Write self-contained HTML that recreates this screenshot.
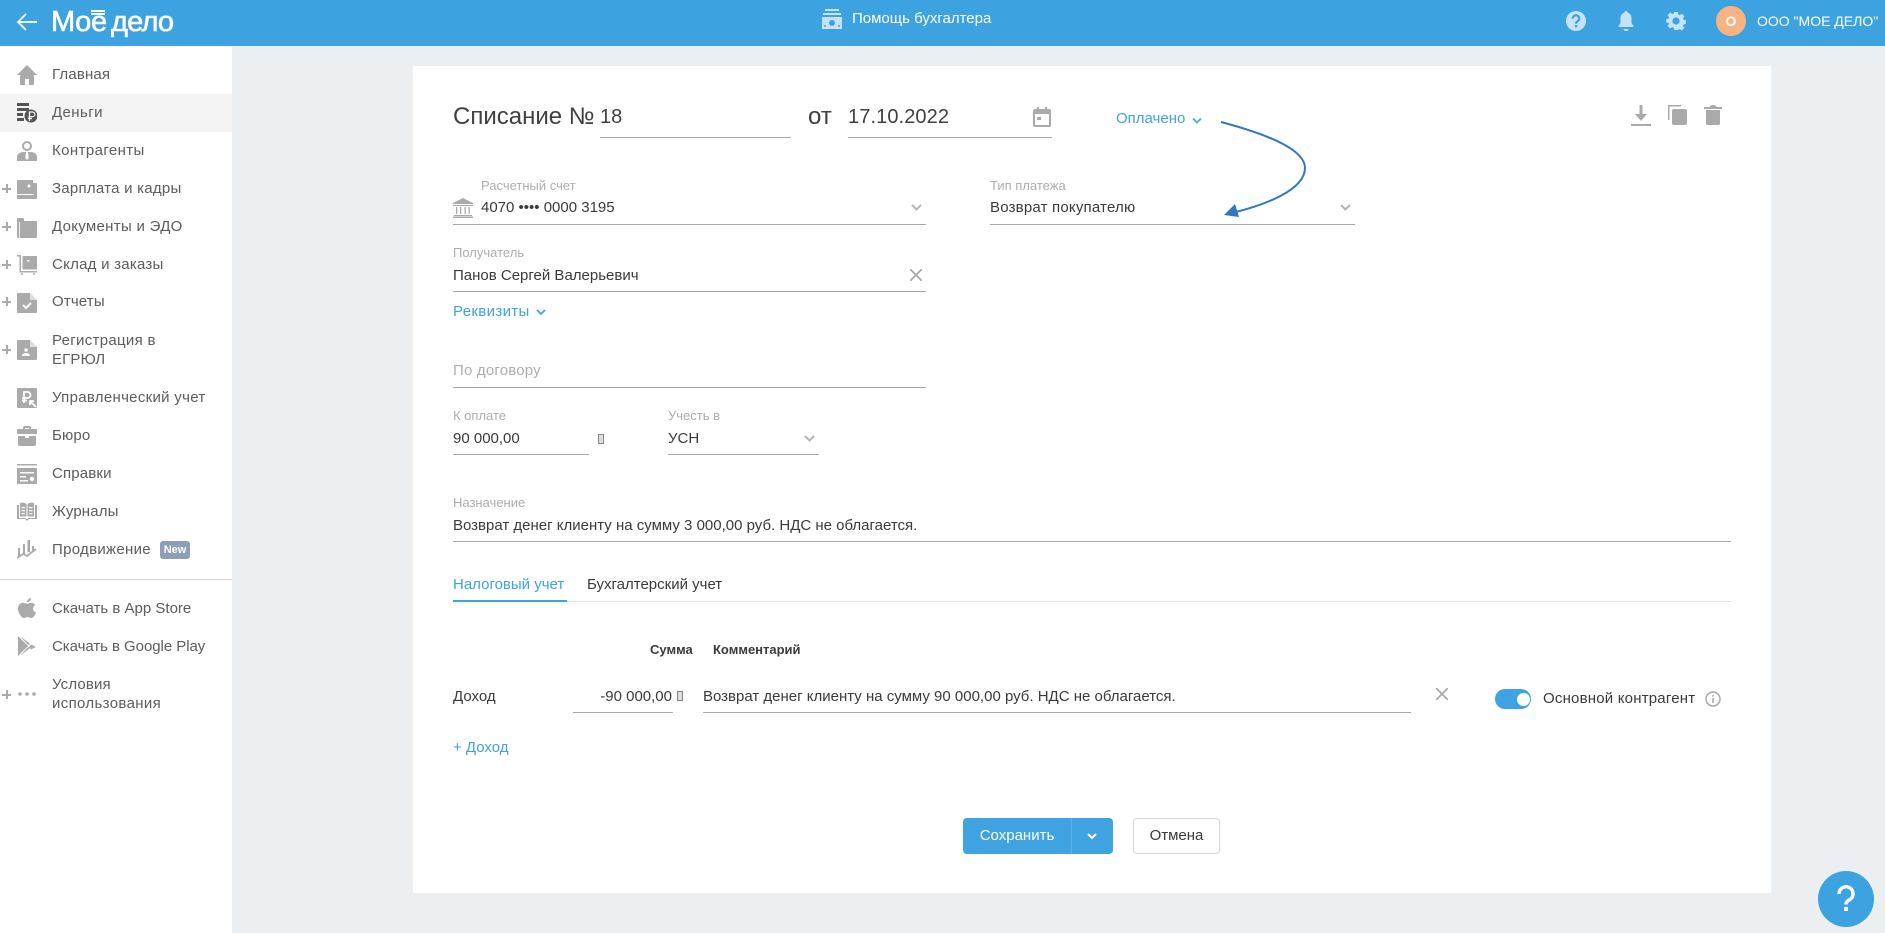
<!DOCTYPE html>
<html lang="ru"><head><meta charset="utf-8"><title>Списание</title>
<style>
html,body{margin:0;padding:0;width:1885px;height:933px;overflow:hidden;background:#ebeff2;font-family:"Liberation Sans",Arial,sans-serif;color:#3b3b3b}
.a,.t,.l,.n,.u,svg{position:absolute}
.t,.l,.n{white-space:nowrap;line-height:20px;height:20px}
.t{font-size:15px;color:#3a3a3a}
.l{font-size:13px;color:#adadad}
.n{font-size:15px;color:#5c5c5c;left:52px;margin-top:1px;letter-spacing:.15px}
.u{height:1px;background:#a9a9a9}
.b{color:#3ea3e0}
.i{left:17px;width:20px;height:20px;fill:#aaa}
.p{position:absolute;left:2px;width:10px;height:10px;font-size:0}
.p:before{content:"";position:absolute;left:0;top:4px;width:9px;height:2px;background:#aaa}
.p:after{content:"";position:absolute;left:3.5px;top:0;width:2px;height:9px;background:#aaa}
.tf{position:absolute;width:4px;height:8px;border:1px solid #888;background:#ddd}
</style></head><body>

<div class="a" style="left:0;top:0;width:1885px;height:46px;background:#3da3e0"></div>
<svg style="left:16px;top:12px" width="22" height="20" viewBox="0 0 22 20" fill="none" stroke="#fff" stroke-width="1.7"><path d="M21 10H2M10 2l-8 8 8 8"/></svg>
<div class="a" style="left:51px;top:4px;font-size:29px;line-height:36px;color:#fff;white-space:nowrap;letter-spacing:-.3px;-webkit-text-stroke:.6px #fff">Мое</div>
<div class="a" style="left:91px;top:10px;width:14px;height:2px;background:#fff"></div>
<div class="a" style="left:91px;top:13px;width:14px;height:2px;background:#fff"></div>
<div class="a" style="left:111px;top:4px;font-size:29px;line-height:36px;color:#fff;white-space:nowrap;letter-spacing:-.8px;-webkit-text-stroke:.6px #fff">дело</div>

<svg style="left:822px;top:9px" width="20" height="20" viewBox="0 0 20 20" fill="#c5e2f6"><rect x="3" y="0" width="14" height="2"/><rect x="1" y="4" width="18" height="2"/><path d="M0 8h20v12H0z"/><circle cx="10" cy="14" r="3" fill="#3da3e0"/><circle cx="3" cy="17" r="1" fill="#3da3e0"/><circle cx="17" cy="17" r="1" fill="#3da3e0"/></svg>
<div class="t" style="left:852px;top:9px;font-size:15px;color:#fff">Помощь бухгалтера</div>

<svg style="left:1566px;top:11px" width="20" height="20" viewBox="0 0 20 20"><circle cx="10" cy="10" r="10" fill="#c5e2f6"/><path d="M6.8 7.5a3.2 3.2 0 1 1 5 2.6c-1.2.8-1.8 1.3-1.8 2.6" fill="none" stroke="#3da3e0" stroke-width="2.2"/><rect x="8.9" y="14" width="2.3" height="2.3" fill="#3da3e0"/></svg>
<svg style="left:1618px;top:10px" width="16" height="22" viewBox="0 0 16 22" fill="#c5e2f6"><path d="M8 1c1 0 1.5.6 1.5 1.5C12 3.300 13.500 5.500 13.500 8v5l2 3v1H.5v-1l2-3V8c0-2.500 1.500-4.700 4-5.500C6.500 1.600 7 1 8 1z"/><path d="M5.500 19h5c0 1.200-1 2-2.500 2s-2.500-.8-2.500-2z"/></svg>
<svg style="left:1666px;top:11px" width="20" height="20" viewBox="0 0 20 20"><path fill="#c5e2f6" d="M8 0h4l.5 2.700 1.800.8 2.300-1.600 2.800 2.800-1.600 2.300.7 1.800 2.500.4v4l-2.500.5-.8 1.800 1.600 2.300-2.800 2.800-2.300-1.600-1.800.7L12 20H8l-.5-2.500-1.800-.7-2.300 1.600-2.800-2.800 1.600-2.300-.8-1.800L-1 11.900V8l2.500-.5.8-1.800L.7 3.400l2.800-2.800 2.200 1.600 1.800-.7z" transform="translate(1 1) scale(.9)"/><circle cx="10" cy="10" r="3.600" fill="#3da3e0"/></svg>
<div class="a" style="left:1716px;top:6px;width:30px;height:30px;border-radius:50%;background:#f9b282;color:#fff;font-size:14px;font-weight:bold;line-height:30px;text-align:center">О</div>
<div class="t" style="left:1757px;top:11px;font-size:14px;color:#fff">ООО "МОЕ ДЕЛО"</div>

<div class="a" style="left:0;top:46px;width:232px;height:887px;background:#fff"></div>
<div class="a" style="left:0;top:94px;width:232px;height:38px;background:#f4f4f4"></div>

<svg class="i" style="top:65px" viewBox="0 0 20 20"><path d="M10 0L0 10h3v8.500c0 .8.500 1.500 1.300 1.500H8v-6h4v6h3.700c.8 0 1.300-.7 1.300-1.500V10h3z"/></svg>
<div class="n" style="top:64px">Главная</div>

<svg class="i" style="top:103px;fill:#555" viewBox="0 0 20 20"><rect width="12" height="3"/><rect y="5" width="12" height="3"/><rect y="10" width="6" height="3"/><rect y="15" width="7" height="3"/><circle cx="14" cy="13" r="6.500"/><path d="M12.500 18v-9h3a2.200 2.200 0 0 1 0 4.700h-4M11 15.500h4" fill="none" stroke="#fff" stroke-width="1.200"/></svg>
<div class="n" style="top:102px;letter-spacing:.4px">Деньги</div>

<svg class="i" style="top:141px" viewBox="0 0 20 20"><circle cx="10" cy="5" r="4" fill="none" stroke="#aaa" stroke-width="2"/><path d="M0 20v-4c0-3 3-5 7-5h6c4 0 7 2 7 5v4H0z"/><path d="M9 11h2l.7 6L10 19l-1.700-2z" fill="#fff"/></svg>
<div class="n" style="top:140px;letter-spacing:.4px">Контрагенты</div>

<div class="p" style="top:184px"></div>
<svg class="i" style="top:180px" viewBox="0 0 20 20"><path d="M1 0h15v3h4v15c0 .6-.4 1-1 1H1c-.6 0-1-.4-1-1V1c0-.6.400-1 1-1z"/><circle cx="12" cy="6" r="1.500" fill="#fff"/><path d="M0 14h17v1H0z" fill="#fff"/></svg>
<div class="n" style="top:178px;letter-spacing:.25px">Зарплата и кадры</div>

<div class="p" style="top:222px"></div>
<svg class="i" style="top:218px" viewBox="0 0 20 20"><path d="M0 1c0-.6.400-1 1-1h5c.6 0 1 .4 1 1v2h12c.6 0 1 .4 1 1v15c0 .6-.4 1-1 1H1c-.6 0-1-.4-1-1z"/><path d="M3 4V20H2.200V4z" fill="#fff"/></svg>
<div class="n" style="top:216px;letter-spacing:.3px">Документы и ЭДО</div>

<div class="p" style="top:260px"></div>
<svg class="i" style="top:255px" viewBox="0 0 20 20"><path d="M0 0h4v16h16v1.500H2.500V1.500H0z"/><rect x="5.500" y="1" width="14.500" height="13.500" rx=".5"/><rect x="10" y="5" width="2.500" height="1.500" fill="#fff"/><circle cx="5" cy="19" r="1"/><circle cx="17" cy="19" r="1"/></svg>
<div class="n" style="top:254px;letter-spacing:.25px">Склад и заказы</div>

<div class="p" style="top:297px"></div>
<svg class="i" style="top:293px" viewBox="0 0 20 20"><path d="M1 0h12l7 7v12c0 .6-.4 1-1 1H1c-.6 0-1-.4-1-1V1c0-.6.400-1 1-1z"/><path d="M13 0v7h7z" fill="#fff" opacity=".6"/><path d="M6 12l3 3 5-5" fill="none" stroke="#fff" stroke-width="2"/></svg>
<div class="n" style="top:291px">Отчеты</div>

<div class="p" style="top:345px"></div>
<svg class="i" style="top:340px" viewBox="0 0 20 20"><path d="M1 0h12l7 7v12c0 .6-.4 1-1 1H1c-.6 0-1-.4-1-1V1c0-.6.400-1 1-1z"/><path d="M13 0v7h7z" fill="#fff" opacity=".6"/><circle cx="9" cy="10" r="1.800" fill="#fff"/><path d="M5 16c0-2 2-3 4-3s4 1 4 3z" fill="#fff"/></svg>
<div class="n" style="top:330px;letter-spacing:.3px">Регистрация в</div>
<div class="n" style="top:349px">ЕГРЮЛ</div>

<svg class="i" style="top:388px" viewBox="0 0 20 20"><path d="M1 0h18c.6 0 1 .4 1 1v18c0 .6-.4 1-1 1H1c-.6 0-1-.4-1-1V1c0-.6.400-1 1-1z"/><path d="M7 15V4h3.500a3 3 0 0 1 0 6H5M5 12.500h5" fill="none" stroke="#fff" stroke-width="1.800"/><path d="M19 19l-6-6M13 17v-4h4" fill="none" stroke="#fff" stroke-width="1.800"/></svg>
<div class="n" style="top:387px;letter-spacing:.3px">Управленческий учет</div>

<svg class="i" style="top:426px" viewBox="0 0 20 20"><path d="M6 3V1.500C6 .6 6.600 0 7.500 0h5c.9 0 1.500.6 1.500 1.500V3h5c.6 0 1 .4 1 1v4H0V4c0-.6.400-1 1-1zm2-1v1h4V2z"/><path d="M1 10h7v2h4v-2h7v8.500c0 .8-.6 1.500-1.500 1.500h-15C1.600 20 1 19.300 1 18.500z"/></svg>
<div class="n" style="top:425px">Бюро</div>

<svg class="i" style="top:464px" viewBox="0 0 20 20"><rect width="20" height="1.500"/><path d="M0 4h20v16H0z"/><g fill="#fff"><rect x="3" y="8" width="14" height="1.500"/><rect x="3" y="12" width="6" height="1.500"/><rect x="3" y="16" width="8" height="1.500"/><circle cx="15" cy="15" r="2.200"/></g></svg>
<div class="n" style="top:463px">Справки</div>

<svg class="i" style="top:502px" viewBox="0 0 20 20"><path d="M0 3h2v13h7v1H0zM20 3h-2v13h-7v1h9z"/><path d="M3 1c2-.6 5-.6 6.500 1v12.500H3zM17 1c-2-.6-5-.6-6.500 1v12.500H17z"/><g fill="#fff"><rect x="4.500" y="5" width="3.500" height="1.200"/><rect x="4.500" y="8" width="3.500" height="1.200"/><rect x="4.500" y="11" width="3.500" height="1.200"/><rect x="12" y="5" width="3.500" height="1.200"/><rect x="12" y="8" width="3.500" height="1.200"/><rect x="12" y="11" width="3.500" height="1.200"/></g><path d="M8 17h4l-2 2z"/></svg>
<div class="n" style="top:501px">Журналы</div>

<svg class="i" style="top:540px" viewBox="0 0 20 20"><rect x="1" y="8" width="2" height="9"/><rect x="6" y="4" width="2" height="10"/><rect x="10.500" y="0" width="2.500" height="12"/><rect x="15" y="6" width="2" height="5"/><path d="M0 18l6-4 4 2 9-7" fill="none" stroke="#aaa" stroke-width="1.800"/></svg>
<div class="n" style="top:539px;letter-spacing:.3px">Продвижение</div>
<div class="a" style="left:160px;top:541px;width:30px;height:18px;border-radius:3px;background:#8d9fb8;color:#fff;font-size:11px;font-weight:bold;line-height:18px;text-align:center">New</div>

<div class="a" style="left:0;top:579px;width:232px;height:1px;background:#d4d4d4"></div>

<svg class="i" style="top:598px" viewBox="0 0 20 20"><path d="M14 0c.1 2.300-1.800 4.400-4 4.300C9.800 2.300 12 .1 14 0z"/><path d="M10 5.800c1 0 2.300-1 4.300-1 1.500 0 3 .8 3.900 2.200-3.300 2-2.700 6.300.8 7.600-.9 2.500-2.800 5.400-4.700 5.400-1.400 0-2-.9-3.700-.9s-2.400.9-3.700.9C4.200 20 1 14.900 1 10.600 1 6.900 3.400 4.800 5.900 4.800c1.800 0 3.100 1 4.100 1z"/></svg>
<div class="n" style="top:598px;letter-spacing:0">Скачать в App Store</div>

<svg class="i" style="top:636px" viewBox="0 0 20 20"><path d="M1 0l10 10L1 20zM3 0l10 8-2 1zM3 20l10-8-2-1zM14 8.500l5 2.500-5 2.500-2-2.500z"/></svg>
<div class="n" style="top:636px;letter-spacing:-.05px">Скачать в Google Play</div>

<div class="p" style="top:690px"></div>
<svg class="i" style="top:684px" viewBox="0 0 20 20"><circle cx="3" cy="10" r="1.800"/><circle cx="10" cy="10" r="1.800"/><circle cx="17" cy="10" r="1.800"/></svg>
<div class="n" style="top:674px">Условия</div>
<div class="n" style="top:693px;letter-spacing:.35px">использования</div>

<div class="a" style="left:413px;top:66px;width:1358px;height:827px;background:#fff"></div>

<div class="t" style="left:453px;top:106px;font-size:24px;line-height:22px;color:#404040">Списание №</div>
<div class="t" style="left:600px;top:107px;font-size:20px;color:#404040">18</div>
<div class="u" style="left:600px;top:137px;width:191px"></div>
<div class="t" style="left:808px;top:106px;font-size:24px;line-height:22px;color:#404040">от</div>
<div class="t" style="left:848px;top:107px;font-size:20px;color:#404040;letter-spacing:.1px">17.10.2022</div>
<div class="u" style="left:848px;top:137px;width:204px"></div>
<svg style="left:1033px;top:107px" width="18" height="20" viewBox="0 0 18 20" fill="#aaa"><path d="M1.500 2H4V0h2v2h6V0h2v2h2.500C17.300 2 18 2.700 18 3.500v15c0 .8-.7 1.500-1.500 1.500h-15C.7 20 0 19.300 0 18.500v-15C0 2.700.7 2 1.500 2zM2 7v11h14V7z"/><rect x="4" y="10" width="4" height="3"/></svg>

<div class="t b" style="left:1116px;top:109px;font-size:15px">Оплачено</div>
<svg style="left:1192px;top:117px" width="10" height="8" viewBox="0 0 10 8" fill="none" stroke="#5bb0e0" stroke-width="2"><path d="M1 1.500l4 4 4-4"/></svg>

<svg style="left:1631px;top:105px" width="20" height="21" viewBox="0 0 20 21" fill="#aaa"><rect y="19" width="20" height="2"/><path d="M8.500 0h3v9H16l-6 7-6-7h4.500z"/></svg>
<svg style="left:1668px;top:105px" width="19" height="20" viewBox="0 0 19 20" fill="#aaa"><path d="M0 0h13v1.500H1.500V15H0z"/><rect x="4" y="4" width="15" height="16" rx="2"/></svg>
<svg style="left:1704px;top:105px" width="18" height="20" viewBox="0 0 18 20" fill="#aaa"><path d="M0 2h5.500C6 .7 7 0 9 0s3 .7 3.500 2H18v2H0z"/><path d="M2 5h14v13.500c0 .8-.7 1.500-1.500 1.500h-11C2.700 20 2 19.300 2 18.500z"/></svg>

<div class="l" style="left:481px;top:176px">Расчетный счет</div>
<svg style="left:453px;top:198px" width="20" height="20" viewBox="0 0 20 20" fill="#aaa"><path d="M10 0l10 5v1H0V5z"/><rect x="0" y="7" width="20" height="1"/><rect x="3" y="9" width="1.300" height="7"/><rect x="7" y="9" width="1.300" height="7"/><rect x="11.500" y="9" width="1.300" height="7"/><rect x="15.500" y="9" width="1.300" height="7"/><rect x="1" y="17" width="18" height="1"/><rect y="18.500" width="20" height="1.500"/></svg>
<div class="t" style="left:481px;top:198px">4070 •••• 0000 3195</div>
<svg style="left:911px;top:204px" width="11" height="7" viewBox="0 0 11 7" fill="none" stroke="#b5b5b5" stroke-width="2"><path d="M1 1l4.500 4.500L10 1"/></svg>
<div class="u" style="left:453px;top:224px;width:473px"></div>

<div class="l" style="left:990px;top:176px">Тип платежа</div>
<div class="t" style="left:990px;top:198px;letter-spacing:.2px">Возврат покупателю</div>
<svg style="left:1340px;top:204px" width="11" height="7" viewBox="0 0 11 7" fill="none" stroke="#b5b5b5" stroke-width="2"><path d="M1 1l4.500 4.500L10 1"/></svg>
<div class="u" style="left:990px;top:224px;width:365px"></div>

<svg style="left:1215px;top:115px" width="100" height="110" viewBox="1215 115 100 110" fill="none"><path d="M1221 122C1270 135 1305 150 1305 168C1305 190 1265 205 1232 213" stroke="#2f78c0" stroke-width="2"/><path d="M1224 215L1235 204L1239 217z" fill="#2f78c0"/></svg>

<div class="l" style="left:453px;top:243px">Получатель</div>
<div class="t" style="left:453px;top:266px">Панов Сергей Валерьевич</div>
<svg style="left:910px;top:269px" width="12" height="12" viewBox="0 0 12 12" stroke="#aaa" stroke-width="1.800"><path d="M0 0l12 12M12 0L0 12"/></svg>
<div class="u" style="left:453px;top:291px;width:473px"></div>
<div class="t b" style="left:453px;top:302px;letter-spacing:.35px">Реквизиты</div>
<svg style="left:536px;top:309px" width="10" height="7" viewBox="0 0 10 7" fill="none" stroke="#3ea3e0" stroke-width="1.800"><path d="M1 1l4 4 4-4"/></svg>

<div class="t" style="left:453px;top:361px;color:#adadad;letter-spacing:.2px">По договору</div>
<div class="u" style="left:453px;top:387px;width:473px"></div>

<div class="l" style="left:453px;top:406px">К оплате</div>
<div class="t" style="left:453px;top:429px">90 000,00</div>
<div class="u" style="left:453px;top:454px;width:136px"></div>
<div class="tf" style="left:598px;top:434px"></div>
<div class="l" style="left:668px;top:406px">Учесть в</div>
<div class="t" style="left:668px;top:429px">УСН</div>
<svg style="left:804px;top:435px" width="11" height="7" viewBox="0 0 11 7" fill="none" stroke="#b5b5b5" stroke-width="2"><path d="M1 1l4.500 4.500L10 1"/></svg>
<div class="u" style="left:668px;top:454px;width:151px"></div>

<div class="l" style="left:453px;top:493px">Назначение</div>
<div class="t" style="left:453px;top:516px">Возврат денег клиенту на сумму 3 000,00 руб. НДС не облагается.</div>
<div class="u" style="left:453px;top:541px;width:1278px"></div>

<div class="t b" style="left:453px;top:575px;font-size:15px">Налоговый учет</div>
<div class="t" style="left:587px;top:575px;font-size:15px">Бухгалтерский учет</div>
<div class="a" style="left:453px;top:601px;width:1278px;height:1px;background:#e4e4e4"></div>
<div class="a" style="left:453px;top:600px;width:114px;height:2px;background:#3ea3e0"></div>

<div class="t" style="left:650px;top:640px;font-size:13px;font-weight:bold;color:#3a3a3a">Сумма</div>
<div class="t" style="left:713px;top:640px;font-size:13px;font-weight:bold;color:#3a3a3a">Комментарий</div>

<div class="t" style="left:453px;top:687px">Доход</div>
<div class="t" style="left:572px;top:687px;width:100px;text-align:right">-90 000,00</div>
<div class="tf" style="left:677px;top:691px"></div>
<div class="u" style="left:573px;top:712px;width:100px"></div>
<div class="t" style="left:703px;top:687px">Возврат денег клиенту на сумму 90 000,00 руб. НДС не облагается.</div>
<div class="u" style="left:703px;top:712px;width:708px"></div>
<svg style="left:1436px;top:688px" width="12" height="12" viewBox="0 0 12 12" stroke="#aaa" stroke-width="1.800"><path d="M0 0l12 12M12 0L0 12"/></svg>

<div class="a" style="left:1495px;top:689px;width:36px;height:20px;border-radius:10px;background:#3ea3e0"></div>
<div class="a" style="left:1516.500px;top:692.500px;width:13px;height:13px;border-radius:50%;background:#fff"></div>
<div class="t" style="left:1543px;top:689px;letter-spacing:.2px">Основной контрагент</div>
<svg style="left:1705px;top:691px" width="16" height="16" viewBox="0 0 16 16"><circle cx="8" cy="8" r="7" fill="none" stroke="#aaa" stroke-width="1.500"/><rect x="7.200" y="7" width="1.600" height="5" fill="#aaa"/><rect x="7.200" y="4" width="1.600" height="1.700" fill="#aaa"/></svg>

<div class="t b" style="left:453px;top:738px">+ Доход</div>

<div class="a" style="left:963px;top:818px;width:150px;height:36px;border-radius:4px;background:#3ea3e0"></div>
<div class="a" style="left:1071px;top:818px;width:1px;height:36px;background:#5ab2e6"></div>
<div class="t" style="left:963px;top:826px;width:108px;text-align:center;color:#fff">Сохранить</div>
<svg style="left:1087px;top:833px" width="10" height="7" viewBox="0 0 10 7" fill="none" stroke="#fff" stroke-width="2"><path d="M1 1l4 4 4-4"/></svg>
<div class="a" style="left:1133px;top:818px;width:85px;height:34px;border:1px solid #d8d8d8;border-radius:4px;background:#fff;font-size:15px;line-height:34px;text-align:center;color:#3a3a3a">Отмена</div>

<svg style="left:1818px;top:871px" width="56" height="56" viewBox="0 0 56 56"><circle cx="28" cy="28" r="28" fill="#3da3e0"/><path d="M21 23a7 7 0 1 1 11 5.500C29.500 30 28 31 28 33.500" fill="none" stroke="#fff" stroke-width="3.400"/><rect x="26" y="36" width="4" height="4" fill="#fff"/></svg>
</body></html>
